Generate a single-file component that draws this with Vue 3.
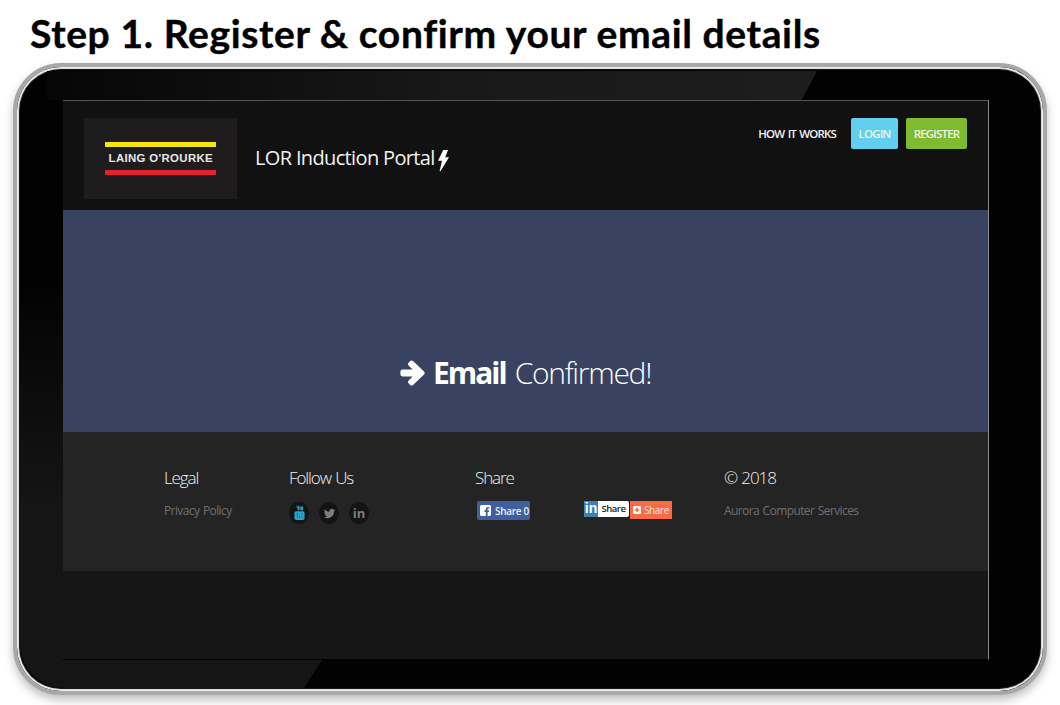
<template>
  <div class="page">
    <h1 class="step-title">Step 1. Register &amp; confirm your email details</h1>

    <div class="tablet">
      <!-- glass reflections on the bezel -->
      <div class="shine shine-top"></div>
      <div class="shine shine-bottom"></div>

      <div class="screen">
        <header class="site-header">
          <div class="brand">
            <div class="logo">
              <span class="logo-bar yellow"></span>
              <span class="logo-text">LAING O'ROURKE</span>
              <span class="logo-bar red"></span>
            </div>
            <div class="portal-name">
              LOR Induction Portal
              <svg class="bolt" viewBox="0 0 11 21">
                <path d="M5.2 0 H10 L7.2 7.2 H11 L2.6 21 H1.6 L4 10.8 H0 Z" fill="#fff" />
              </svg>
            </div>
          </div>
          <nav class="site-nav">
            <a class="nav-link">HOW IT WORKS</a>
            <a class="btn btn-login">LOGIN</a>
            <a class="btn btn-register">REGISTER</a>
          </nav>
        </header>

        <section class="hero">
          <h2 class="hero-text">
            <svg class="arrow" viewBox="0 0 25 28">
              <path d="M2.5 10.6 H12.6 L8.6 6.4 Q7.3 5 8.6 3.7 L10.2 2.1 Q11.6 0.8 13 2.1 L23.8 12.2 Q25.6 14 23.8 15.8 L13 25.9 Q11.6 27.2 10.2 25.9 L8.6 24.3 Q7.3 23 8.6 21.6 L12.6 17.4 H2.5 Q0.4 17.4 0.4 15.3 V12.7 Q0.4 10.6 2.5 10.6 Z" fill="#fff" />
            </svg>
            <strong>Email</strong> <span>Confirmed!</span>
          </h2>
        </section>

        <footer class="site-footer">
          <div class="foot-col">
            <h3>Legal</h3>
            <a class="foot-link">Privacy Policy</a>
          </div>
          <div class="foot-col">
            <h3>Follow Us</h3>
            <div class="socials">
              <span class="social">
                <svg viewBox="0 0 12 16" class="yt">
                  <path d="M2.2 0 H3.6 L4.2 2.4 L4.8 0 H6 V5 H4 V3.4 Z M7 1 H10 V5 H7 Z" fill="#2ba3cc" />
                  <rect x="0.5" y="6.2" width="11" height="9.4" rx="2" fill="#2ba3cc" />
                  <path d="M2.6 8.4 H4.8 M3.7 8.4 V13.6 M6 10 V13.4 H7.4 M8.8 8.4 V13.4 H10" stroke="#1d6f8c" stroke-width="0.8" fill="none" />
                </svg>
              </span>
              <span class="social">
                <svg viewBox="0 0 24 24" class="tw">
                  <path d="M22.5 5.6c-.8.4-1.6.6-2.5.7.9-.5 1.6-1.4 1.9-2.4-.8.5-1.8.9-2.7 1a4.3 4.3 0 0 0-7.4 3.9C8.200 8.600 5 6.900 2.900 4.300a4.300 4.300 0 0 0 1.300 5.700c-.7 0-1.400-.2-2-.5 0 2.100 1.500 3.900 3.500 4.300-.6.200-1.300.2-1.900.1.500 1.700 2.100 2.900 4 3A8.700 8.700 0 0 1 1.500 18.700 12.200 12.200 0 0 0 20.300 7.900c.9-.6 1.600-1.400 2.200-2.300z" fill="#7d7d7d" />
                </svg>
              </span>
              <span class="social in-glyph">in</span>
            </div>
          </div>
          <div class="foot-col">
            <h3>Share</h3>
            <div class="shares">
              <a class="fb-share">
                <svg viewBox="0 0 11 11" class="fb-icon">
                  <rect width="11" height="11" rx="1.500" fill="#fff" />
                  <path d="M7.600 11 V6.900 H9 L9.200 5.200 H7.600 V4.200 Q7.600 3.400 8.400 3.400 H9.300 V1.900 H8 Q5.800 1.900 5.800 4 V5.200 H4.500 V6.900 H5.800 V11 Z" fill="#3f5f9f" />
                </svg>
                Share 0
              </a>
              <div class="other-shares">
                <a class="li-share"><span class="li-mark">in</span><span class="li-label">Share</span></a>
                <a class="plus-share">
                  <svg viewBox="0 0 9 9" class="plus-icon">
                    <rect width="9" height="9" rx="1.500" fill="#fff" />
                    <path d="M4.500 2 V7 M2 4.500 H7" stroke="#f96a45" stroke-width="1.800" />
                  </svg>
                  Share
                </a>
              </div>
            </div>
          </div>
          <div class="foot-col">
            <h3>© 2018</h3>
            <a class="foot-link">Aurora Computer Services</a>
          </div>
        </footer>

        <div class="screen-rest"></div>
      </div>
    </div>
  </div>
</template>

<script setup>
</script>

<style>
body {
  background: #fff;
}
</style>

<style scoped>
.page {
  width: 1060px;
  height: 705px;
  overflow: hidden;
  background: #fff;
}

.step-title {
  margin: 0;
  height: 63px;
  padding: 12px 0 0 30px;
  box-sizing: border-box;
  font-family: "Lato", "Liberation Sans", sans-serif;
  font-size: 39px;
  line-height: 42px;
  font-weight: 700;
  letter-spacing: 0.62px;
  -webkit-text-stroke: 0.4px #000;
  color: #000;
  white-space: nowrap;
}

.tablet {
  position: relative;
  margin-left: 13px;
  width: 1034px;
  height: 632px;
  box-sizing: border-box;
  padding: 33px 54px 31px 46px;
  border: 4px solid #a8a8a8;
  border-radius: 48px;
  background: #020202;
  box-shadow: inset 0 0 1px 2px #f0f0f0, 0 5px 10px rgba(0, 0, 0, 0.25);
}

.shine {
  position: absolute;
}

.shine-top {
  left: 30px;
  top: 4px;
  width: 770px;
  height: 29px;
  clip-path: polygon(0 0, 100% 0, 98% 100%, 0 100%);
  background: linear-gradient(90deg, #060606, #191919 55%, #1d1d1d);
}

.shine-bottom {
  left: 3px;
  bottom: 3px;
  width: 302px;
  height: 400px;
  border-bottom-left-radius: 44px;
  clip-path: polygon(0 0, 43px 0, 43px 372px, 100% 372px, 94% 100%, 0 100%);
  background: linear-gradient(180deg, #030303, #151515 55%);
}

.screen {
  position: relative;
  height: 560px;
  width: 926px;
  display: flex;
  flex-direction: column;
  background: #161616;
  border-top: 1px solid #555;
  border-right: 1px solid #8a8a8a;
  border-bottom: 1px solid #000;
  box-sizing: border-box;
  font-family: "Open Sans", "Liberation Sans", sans-serif;
}

.site-header {
  height: 109px;
  display: flex;
  justify-content: space-between;
  align-items: flex-start;
  padding: 17px 21px 0 21px;
  box-sizing: border-box;
  background: #111;
}

.brand {
  display: flex;
  align-items: center;
  gap: 18px;
}

.logo {
  width: 153px;
  height: 81px;
  background: #1f1c1d;
  display: flex;
  flex-direction: column;
  align-items: center;
  justify-content: center;
  gap: 5px;
}

.logo-bar {
  width: 111px;
  height: 5px;
}

.logo-bar.yellow {
  background: #f6e60e;
}

.logo-bar.red {
  background: #e4222e;
}

.logo-text {
  font-family: "Liberation Sans", sans-serif;
  font-size: 10px;
  line-height: 13px;
  font-weight: 700;
  letter-spacing: 0.3px;
  transform: scaleX(1.14);
  color: #e8e8e8;
  white-space: nowrap;
}

.portal-name {
  display: flex;
  align-items: center;
  gap: 3px;
  padding-bottom: 3px;
  font-size: 20px;
  color: #f2f2f2;
  letter-spacing: -0.65px;
  white-space: nowrap;
}

.bolt {
  width: 11px;
  height: 21px;
  margin-top: 6px;
}

.site-nav {
  display: flex;
  align-items: center;
  font-size: 11.5px;
  font-weight: 600;
  letter-spacing: -0.85px;
  word-spacing: 1.2px;
  white-space: nowrap;
}

.nav-link {
  color: #f2f2f2;
  margin-right: 15px;
}

.btn {
  height: 31px;
  line-height: 31px;
  border-radius: 2px;
  color: #eef7e6;
  text-align: center;
  box-sizing: border-box;
}

.btn-login {
  width: 47px;
  background: #63cfee;
  margin-right: 8px;
}

.btn-register {
  width: 61px;
  background: #7fba2f;
}

.hero {
  height: 222px;
  flex-shrink: 0;
  background: #3a4262;
  display: flex;
  justify-content: center;
  box-sizing: border-box;
  padding-top: 138px;
}

.hero-text {
  margin: 0;
  display: flex;
  align-items: center;
  height: 48px;
  font-size: 30px;
  font-weight: 400;
  color: #fff;
  white-space: nowrap;
}

.hero-text strong {
  font-weight: 700;
  margin-right: 9px;
  letter-spacing: -2px;
}

.hero-text span {
  font-weight: 300;
  letter-spacing: -1.3px;
}

.arrow {
  width: 25px;
  height: 28px;
  margin-right: 8px;
  margin-top: 1px;
}

.site-footer {
  height: 139px;
  flex-shrink: 0;
  background: #242424;
  display: grid;
  grid-template-columns: 125px 186px 249px 1fr;
  padding: 34px 0 0 101px;
  box-sizing: border-box;
}

.foot-col h3 {
  margin: 0 0 8px;
  font-size: 17px;
  line-height: 24px;
  font-weight: 300;
  letter-spacing: -1.1px;
  word-spacing: 1px;
  color: #f0f0f0;
  white-space: nowrap;
}

.foot-link {
  font-size: 12px;
  line-height: 18px;
  letter-spacing: -0.6px;
  word-spacing: 1px;
  color: #6f6f6f;
  white-space: nowrap;
}

.socials {
  display: flex;
  gap: 10px;
  padding-top: 4px;
}

.social {
  width: 20px;
  height: 22px;
  border-radius: 50%;
  background: #141414;
  display: flex;
  align-items: center;
  justify-content: center;
}

.yt {
  width: 11px;
  height: 16px;
}

.tw {
  width: 13px;
  height: 13px;
}

.in-glyph {
  font-size: 13px;
  font-weight: 700;
  color: #7d7d7d;
}

.shares {
  display: flex;
  align-items: flex-start;
  gap: 54px;
  padding: 3px 0 0 2px;
}

.fb-share {
  display: flex;
  align-items: center;
  gap: 4px;
  width: 53px;
  height: 19px;
  box-sizing: border-box;
  padding-left: 3px;
  border-radius: 2px;
  background: #3f5f9f;
  color: #eef;
  font-size: 10px;
  font-weight: 600;
  letter-spacing: -0.3px;
  white-space: nowrap;
}

.fb-icon {
  width: 11px;
  height: 11px;
}

.other-shares {
  display: flex;
  gap: 1px;
}

.li-share {
  display: flex;
  width: 45px;
  height: 16px;
  background: #fff;
  border-radius: 2px;
  overflow: hidden;
}

.li-mark {
  width: 14px;
  background: #3b82b8;
  color: #fff;
  font-family: "Liberation Sans", sans-serif;
  font-size: 14px;
  line-height: 15px;
  font-weight: 700;
  text-align: center;
}

.li-label {
  flex: 1;
  color: #222;
  font-size: 9.5px;
  line-height: 16px;
  text-align: center;
  font-weight: 600;
  letter-spacing: -0.5px;
}

.plus-share {
  display: flex;
  align-items: center;
  gap: 3px;
  width: 42px;
  height: 18px;
  box-sizing: border-box;
  padding-left: 3px;
  background: #f96a45;
  color: #ffe9e2;
  font-size: 10px;
  letter-spacing: -0.4px;
}

.plus-icon {
  width: 8px;
  height: 8px;
}

.screen-rest {
  flex: 1;
  background: #161616;
}
</style>
